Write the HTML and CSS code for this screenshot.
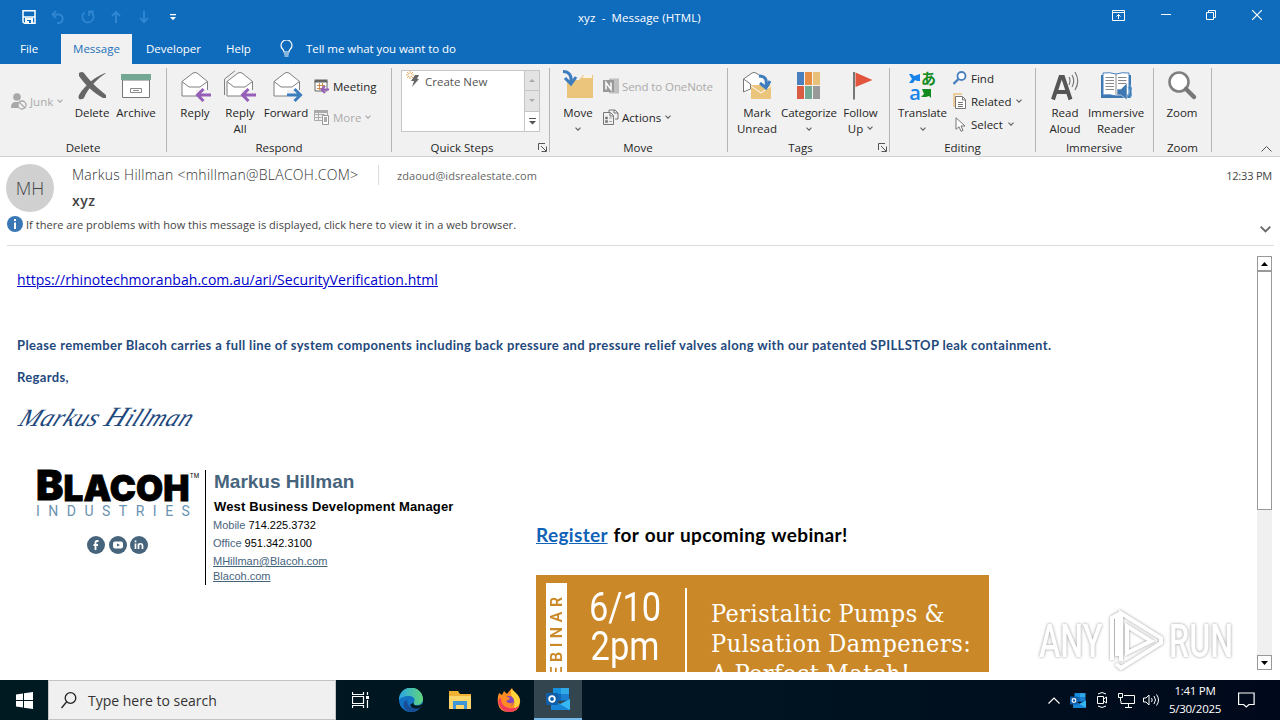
FILE: index.html
```html
<!DOCTYPE html>
<html lang="en">
<head>
  <meta charset="UTF-8" />
  <title>xyz - Message (HTML)</title>
  <link rel="stylesheet" href="styles.css">
</head>
<body>
  <!-- shared shapes -->
  <svg width="0" height="0" class="defs">
    <symbol id="env" viewBox="0 0 32 32">
      <path d="M3 11.500 14 3q2-1 4 0l10.500 8.500V26H3z" fill="#fff" stroke="#808080"/>
      <path d="M3 11.500 10 17h11l7.500-5.500" fill="none" stroke="#808080"/>
    </symbol>
    <symbol id="reply-arrow" viewBox="0 0 16 14">
      <path d="M8.500 1 2.500 7l6 6M3 7h13" fill="none" stroke="#955fb8" stroke-width="3"/>
    </symbol>
    <symbol id="caret" viewBox="0 0 6 4">
      <path d="M.5.700 3 3.200 5.500.700" fill="none" stroke="currentColor" stroke-width="1.200"/>
    </symbol>
    <symbol id="launcher" viewBox="0 0 9 9">
      <path d="M.5 7V.5H7M3 3l5 5M8.500 3.500v5h-5" fill="none" stroke="#555"/>
    </symbol>
    <symbol id="outlook" viewBox="0 0 24 22">
      <path d="M7 0h16v13H7z" fill="#1066b5"/>
      <path d="M7 0h8v6H7z" fill="#1490df"/><path d="M15 0h8v6h-8z" fill="#32a9e7"/>
      <path d="M15 6h8v6h-8z" fill="#1a7fd0"/>
      <path d="M5 11l9 5 10-5v11H5z" fill="#35b8f1"/><path d="M5 11l19 11H5z" fill="#1784d8"/>
      <rect x="0" y="5" width="12" height="12" rx="1" fill="#0f5ea8"/>
      <circle cx="6" cy="11" r="2.800" fill="none" stroke="#fff" stroke-width="1.800"/>
    </symbol>
  </svg>

  <div class="titlebar">
    <div class="quick">
      <svg width="14" height="14" viewBox="0 0 14 14"><path d="M1 .7h12v12.600H2.500L1 12zM1 7h12" fill="none" stroke="#fff" stroke-width="1.500"/><path d="M3 8h8v5.500H3z" fill="#fff"/><path d="M5 10h4v3H7v-2H5z" fill="#0f6cbd"/></svg>
      <svg class="dim" width="14" height="14" viewBox="0 0 14 14"><path d="M5 1 1.500 4.500 5 8M2 4.500h6a4.300 4.300 0 0 1 0 8.500H6" fill="none" stroke="currentColor" stroke-width="2"/></svg>
      <svg class="dim" width="14" height="14" viewBox="0 0 14 14"><path d="M9 1.700A5.600 5.600 0 1 1 3.500 2.500M8 6V1.500h5" fill="none" stroke="currentColor" stroke-width="1.800"/></svg>
      <svg class="dim" width="12" height="14" viewBox="0 0 12 14"><path d="M6 13V2M2 6l4-4 4 4" fill="none" stroke="currentColor" stroke-width="2"/></svg>
      <svg class="dim" width="12" height="14" viewBox="0 0 12 14"><path d="M6 1v11M2 8l4 4 4-4" fill="none" stroke="currentColor" stroke-width="2"/></svg>
      <svg class="customize" width="6" height="7" viewBox="0 0 6 7"><path d="M0 0h6v1.200H0zM0 3h6L3 6.200z" fill="#fff"/></svg>
    </div>
    <div class="title">xyz&nbsp; -&nbsp; Message (HTML)</div>
    <div class="window-buttons">
      <svg width="13" height="11" viewBox="0 0 13 11"><path d="M.5.500h12v10H.5zM.5 2.500h12M6.500 9V4.500M4.500 6.500l2-2 2 2" fill="none" stroke="#fff"/></svg>
      <svg width="10" height="11" viewBox="0 0 10 11"><path d="M0 4.500h10" stroke="#fff"/></svg>
      <svg width="10" height="10" viewBox="0 0 10 10"><path d="M.5 2.500h7v7h-7zM2.500 2V.5h7v7H8" fill="none" stroke="#fff"/></svg>
      <svg width="10" height="10" viewBox="0 0 10 10"><path d="m0 0 10 10M10 0 0 10" stroke="#fff" stroke-width="1.200"/></svg>
    </div>
  </div>

  <div class="tabs">
    <span class="tab file">File</span>
    <span class="tab active">Message</span>
    <span class="tab developer">Developer</span>
    <span class="tab help">Help</span>
    <svg width="13" height="17" viewBox="0 0 13 17"><path d="M4 12c0-3-3-3-3-6.500a5.500 5.500 0 0 1 11 0C12 9 9 9 9 12zM4 14h5M4.500 16h4" fill="none" stroke="#fff" stroke-width="1.200"/></svg>
    <span class="tell">Tell me what you want to do</span>
  </div>

  <div class="ribbon">
    <div class="group g-delete">
      <div class="tools">
        <div class="small junk off">
          <svg width="16" height="17" viewBox="0 0 16 17"><circle cx="6" cy="4" r="3.800" fill="#a8a8a8"/><path d="M0 15c0-5 2-6 5-6h4l-2 6z" fill="#a8a8a8"/><circle cx="11" cy="12" r="4" fill="#f1f1f1" stroke="#a8a8a8" stroke-width="1.300"/><path d="m8 9 6 6" stroke="#a8a8a8" stroke-width="1.300"/></svg>
          <span>Junk</span><svg class="caret" width="6" height="4"><use href="#caret"/></svg>
        </div>
        <div class="big w44">
          <svg width="32" height="32" viewBox="0 0 32 32"><path d="M3 3q3-2 5 0c6 8 12 14 22 22v3h-3C18 23 9 15 3 6z" fill="#666"/><path d="M30 3C21 9 12 18 8 28q-2 2-5 1-1-2 0-4C9 15 19 7 29 3z" fill="#666"/></svg>
          <span>Delete</span>
        </div>
        <div class="big w44">
          <svg width="32" height="32" viewBox="0 0 32 32"><path d="M2.500 10h27v17.500h-27z" fill="#fff" stroke="#777"/><path d="M1 4h30v6H1z" fill="#75a894"/><path d="M10.500 18.500h11v4h-11zM13 20.500h6" fill="#fff" stroke="#888"/></svg>
          <span>Archive</span>
        </div>
      </div>
      <div class="label">Delete</div>
    </div>

    <div class="group g-respond">
      <div class="tools">
        <div class="big w48">
          <svg width="32" height="32" viewBox="0 0 32 32"><use href="#env"/><path d="M17 20h15v12H19z" fill="#f1f1f1"/><use href="#reply-arrow" x="16" y="18" width="16" height="14"/></svg>
          <span>Reply</span>
        </div>
        <div class="big w42">
          <svg width="34" height="32" viewBox="0 0 34 32"><path d="M1.500 25V9L12 .8" fill="none" stroke="#808080"/><use href="#env" x="1" width="32" height="32"/><path d="M18 20h15v12H20z" fill="#f1f1f1"/><use href="#reply-arrow" x="17" y="18" width="16" height="14"/></svg>
          <span>Reply<br>All</span>
        </div>
        <div class="big w50">
          <svg width="34" height="32" viewBox="0 0 34 32"><use href="#env" x="2" width="32" height="32"/><path d="M18 20h14v12H18z" fill="#f1f1f1"/><path d="M18 25h13M25.500 19l6 6-6 6" fill="none" stroke="#3d7dbd" stroke-width="3"/></svg>
          <span>Forward</span>
        </div>
        <div class="stack two respond-stack">
          <div class="small">
            <svg width="16" height="16" viewBox="0 0 16 16"><path d="M1 3h12v10H1z" fill="#fff" stroke="#666"/><path d="M.5 1.500h13v3H.5z" fill="#666"/><path d="M3 7.500h8M3 10.500h5M5.500 5v7M8.500 5v4" stroke="#d08a4a"/><path d="m11 8-3.500 3.500L11 15M8 11.500h7" fill="none" stroke="#955fb8" stroke-width="2"/></svg>
            <span class="meeting">Meeting</span>
          </div>
          <div class="small off">
            <svg width="16" height="16" viewBox="0 0 16 16"><path d="M.5 2.500h13v9H.5zM.5 5.500h10M4.500 3v8M.5 8.500h7" fill="none" stroke="#aaa"/><path d="M0 1h14v3H0z" fill="#aaa"/><path d="M8.500 6.500h6v9h-6z" fill="#fff" stroke="#999"/><path d="M10 8h3v5h-3z" fill="#aaa"/></svg>
            <span class="more">More</span><svg class="caret" width="6" height="4"><use href="#caret"/></svg>
          </div>
        </div>
      </div>
      <div class="label">Respond</div>
    </div>

    <div class="group g-quick">
      <div class="tools">
        <div class="gallery">
          <div class="step">
            <svg width="14" height="17" viewBox="0 0 14 17"><path d="M9 4h4l-2 4h2L6 16l2-6H5z" fill="#666"/><path d="M4 0v8M0 4h8M1 1l6 6M7 1 1 7" stroke="#e6a65c" stroke-width=".9"/><circle cx="4" cy="4" r="1.500" fill="#fff"/></svg>
            <span>Create New</span>
          </div>
          <div class="gallery-bar">
            <span><svg width="6" height="3" viewBox="0 0 6 3"><path d="M0 3 3 0l3 3z" fill="#aaa"/></svg></span>
            <span><svg width="6" height="3" viewBox="0 0 6 3"><path d="m0 0 3 3 3-3z" fill="#aaa"/></svg></span>
            <span class="on"><svg width="7" height="7" viewBox="0 0 7 7"><path d="M0 0h7v1H0zM0 3h7L3.500 6.500z" fill="#555"/></svg></span>
          </div>
        </div>
      </div>
      <div class="label">Quick Steps</div>
      <svg class="launch" width="9" height="9"><use href="#launcher"/></svg>
    </div>

    <div class="group g-move">
      <div class="tools">
        <div class="big w46">
          <svg width="32" height="32" viewBox="0 0 32 32"><path d="M5 10h12l4-5h10v23H5z" fill="#ecc57c"/><path d="m20 8 2-3h8v3z" fill="#fff" opacity=".8"/><path d="M1 1.500c6 0 9 4 8 11" fill="none" stroke="#3d7dbd" stroke-width="3"/><path d="m3 8 6 6 5-7" fill="none" stroke="#3d7dbd" stroke-width="3"/></svg>
          <span>Move</span><svg class="caret under" width="6" height="4"><use href="#caret"/></svg>
        </div>
        <div class="stack two move-stack">
          <div class="small off">
            <svg width="16" height="16" viewBox="0 0 16 16"><path d="M6 .5h10v15H6z" fill="#c0c0c0"/><path d="M0 2h11v12H0z" fill="#999"/><path d="M3 11.500v-7l5 7v-7" fill="none" stroke="#fff" stroke-width="1.500"/></svg>
            <span class="onenote">Send to OneNote</span>
          </div>
          <div class="small">
            <svg width="16" height="16" viewBox="0 0 16 16"><path d="M.5 3.500h7l3 3v9H.5zM7 4v3h3M6 3V1h6l3 3v6h-3M11 1v3h4" fill="none" stroke="#777"/><path d="M2.500 8h2v2h-2zM2.500 11.500h2v2h-2zM6 9h3M6 12.500h3" fill="#777" stroke="#777" stroke-width=".6"/></svg>
            <span class="actions">Actions</span><svg class="caret" width="6" height="4"><use href="#caret"/></svg>
          </div>
        </div>
      </div>
      <div class="label">Move</div>
    </div>

    <div class="group g-tags">
      <div class="tools">
        <div class="big w44">
          <svg width="32" height="32" viewBox="0 0 32 32"><path d="M2.500 23V9L11 3q2-1 4 0l7 5v9L11 23z" fill="#fff"/><path d="M2.500 22V9L11 3q2-1 4 0l3 2M2.500 9l7 5v5l-7 3" fill="none" stroke="#777"/><path d="M10 15h20v14H10z" fill="#ecc57c"/><path d="m10 16 10 7 10-7" fill="none" stroke="#fff"/><path d="M18 6c7 0 8 4 7 10" fill="none" stroke="#3d7dbd" stroke-width="3"/><path d="m19 13 6 5 4-7" fill="none" stroke="#3d7dbd" stroke-width="3"/></svg>
          <span>Mark<br>Unread</span>
        </div>
        <div class="big w60">
          <svg width="32" height="32" viewBox="0 0 32 32"><path d="M4 2h7v13H4z" fill="#4a7fbd"/><path d="M12 2h7v13h-7z" fill="#e88d44"/><path d="M20 2h7v13h-7z" fill="#e8c078"/><path d="M4 16h7v13H4z" fill="#d95b43"/><path d="M12 16h7v13h-7z" fill="#72a893"/><path d="M20 16h7v13h-7z" fill="#999"/></svg>
          <span class="categorize">Categorize</span><svg class="caret under" width="6" height="4"><use href="#caret"/></svg>
        </div>
        <div class="big w43">
          <svg width="32" height="32" viewBox="0 0 32 32"><path d="M9 2v27.500" stroke="#777" stroke-width="2"/><path d="m10.500 2.500 17 7.500-17 7z" fill="#e2543c"/></svg>
          <span>Follow<br>Up <svg class="caret up" width="6" height="4"><use href="#caret"/></svg></span>
        </div>
      </div>
      <div class="label">Tags</div>
      <svg class="launch" width="9" height="9"><use href="#launcher"/></svg>
    </div>

    <div class="group g-editing">
      <div class="tools">
        <div class="big w53">
          <div class="translate"><svg width="12" height="9" viewBox="0 0 12 9"><path d="M0 0h3l2 2 6-2v7H8L6 6 4 9H0l3-4z" fill="#1583e9"/></svg><b class="ja">あ</b><b class="latin">a</b><svg width="11" height="10" viewBox="0 0 11 10"><path d="M1 1h9v9L8 8l-3 1H0l3-3z" fill="#128a20"/></svg></div>
          <span class="translate-text">Translate</span><svg class="caret under" width="6" height="4"><use href="#caret"/></svg>
        </div>
        <div class="stack three">
          <div class="small">
            <svg width="14" height="14" viewBox="0 0 14 14"><circle cx="8.500" cy="5" r="4" fill="#fff" stroke="#4a7fbd" stroke-width="1.800"/><path d="m5.500 8-5 5" stroke="#4a7fbd" stroke-width="2.300"/></svg>
            <span>Find</span>
          </div>
          <div class="small">
            <svg width="14" height="16" viewBox="0 0 14 16"><path d="M1 14V1h8" fill="none" stroke="#ecc080" stroke-width="1.500"/><path d="M2.500 3.500h7l3 3v9h-10zM9.500 4v3h3M5 9.500h5M5 11.500h5M5 13.500h5" fill="#fff" stroke="#777"/></svg>
            <span class="related">Related</span><svg class="caret" width="6" height="4"><use href="#caret"/></svg>
          </div>
          <div class="small">
            <svg width="14" height="15" viewBox="0 0 14 15"><path d="M3 .8v11.500l3-2.500 2 4.500 2-.8-2-4.500h4z" fill="#fff" stroke="#777"/></svg>
            <span>Select</span><svg class="caret" width="6" height="4"><use href="#caret"/></svg>
          </div>
        </div>
      </div>
      <div class="label">Editing</div>
    </div>

    <div class="group g-immersive">
      <div class="tools">
        <div class="big w44">
          <svg width="32" height="32" viewBox="0 0 32 32"><path d="M4 29.500 11.500 7h2.500l7.500 22.500M7 22h12" fill="none" stroke="#555" stroke-width="4"/><path d="M20 7q2 4 0 8M23 5q3.500 6 0 12M26 2q5.500 9 0 18" fill="none" stroke="#777" stroke-width="1.200"/></svg>
          <span>Read<br>Aloud</span>
        </div>
        <div class="big w58">
          <svg width="32" height="32" viewBox="0 0 32 32"><path d="M1 5h30v23H1z" fill="#3d78b0"/><path d="M3 3q7-1 13 1 6-2 13-1v22q-7-1-13 1-6-2-13-1z" fill="#fff" stroke="#4a7fbd"/><path d="M16 4v21M5.500 7.500H14M5.500 10.500H14M5.500 13.500H14M5.500 16.500H14M5.500 19.500H14M18 7.500h8.500M18 10.500h8.500M18 13.500h8.500" stroke="#888"/><path d="M17 19h4l6-6v17l-6-5h-4z" fill="#3d78b0" stroke="#f1f1f1" stroke-width=".6"/><path d="M28 17q3 4 0 9M30 15q4 7 0 13" fill="none" stroke="#65a1d4" stroke-width="1.200"/></svg>
          <span>Immersive<br>Reader</span>
        </div>
      </div>
      <div class="label">Immersive</div>
    </div>

    <div class="group g-zoom">
      <div class="tools">
        <div class="big w56">
          <svg width="32" height="32" viewBox="0 0 32 32"><circle cx="13" cy="12" r="9.500" fill="#fff" stroke="#808080" stroke-width="2.600"/><path d="m20 19 8 8" stroke="#777" stroke-width="4.500" stroke-linecap="round"/></svg>
          <span>Zoom</span>
        </div>
      </div>
      <div class="label">Zoom</div>
    </div>
    <svg class="collapse" width="11" height="6" viewBox="0 0 11 6"><path d="m.5 5.500 5-5 5 5" fill="none" stroke="#555"/></svg>
  </div>

  <div class="header">
    <div class="sender">
      <div class="avatar">MH</div>
      <div class="who">
        <div class="addresses"><span class="from">Markus Hillman &lt;mhillman@BLACOH.COM&gt;</span><span class="to">zdaoud@idsrealestate.com</span></div>
        <div class="subject">xyz</div>
      </div>
      <div class="time">12:33 PM</div>
    </div>
    <div class="info">
      <svg width="16" height="16" viewBox="0 0 16 16"><circle cx="8" cy="8" r="8" fill="#3a78b5"/><path d="M7 3h2v2H7zM7 6.500h2V13H7z" fill="#fff"/></svg>
      <span>If there are problems with how this message is displayed, click here to view it in a web browser.</span>
      <svg class="expand" width="11" height="7" viewBox="0 0 11 7"><path d="m.7.700 4.800 4.800L10.300.700" fill="none" stroke="#666" stroke-width="1.800"/></svg>
    </div>
  </div>

  <div class="message">
    <div class="mail">
      <a class="url" href="#">https://rhinotechmoranbah.com.au/ari/SecurityVerification.html</a>
      <p class="remember">Please remember Blacoh carries a full line of system components including back pressure and pressure relief valves along with our patented SPILLSTOP leak containment.</p>
      <p class="regards">Regards,</p>
      <div class="signature"><span>Markus <em>H</em>illman</span></div>
      <div class="columns">
        <div class="logo">
          <div class="blacoh"><span class="b">B</span><span class="lacoh">LACOH</span><sup>TM</sup></div>
          <div class="industries">INDUSTRIES</div>
          <div class="social">
            <svg width="18" height="18" viewBox="0 0 18 18"><circle cx="9" cy="9" r="9" fill="#47647d"/><path d="M11.500 5H10q-1.500 0-1.500 1.500V14M6.500 9H11" fill="none" stroke="#fff" stroke-width="1.800"/></svg>
            <svg width="18" height="18" viewBox="0 0 18 18"><circle cx="9" cy="9" r="9" fill="#47647d"/><rect x="4" y="5.500" width="10" height="7" rx="2" fill="#fff"/><path d="m8 7.500 3 1.500-3 1.500z" fill="#47647d"/></svg>
            <svg width="18" height="18" viewBox="0 0 18 18"><circle cx="9" cy="9" r="9" fill="#47647d"/><path d="M5.500 7.500V13M5.500 4.500v1.700M8.500 13V7.500M8.500 10c0-3 4-3 4 0v3" fill="none" stroke="#fff" stroke-width="1.700"/></svg>
          </div>
        </div>
        <div class="contact">
          <div class="name">Markus Hillman</div>
          <div class="job">West Business Development Manager</div>
          <div class="line mobile"><i>Mobile</i> 714.225.3732</div>
          <div class="line office"><i>Office</i> 951.342.3100</div>
          <div class="line mailto"><a href="#">MHillman@Blacoh.com</a></div>
          <div class="line site"><a href="#">Blacoh.com</a></div>
        </div>
        <div class="webinar">
          <div class="register"><a href="#">Register</a> for our upcoming webinar!</div>
          <div class="banner">
            <div class="strip"><span>WEBINAR</span></div>
            <div class="date"><span class="day">6/10</span><span class="hour">2pm</span></div>
            <div class="topic">Peristaltic Pumps &amp;<br>Pulsation Dampeners:<br>A Perfect Match!</div>
          </div>
        </div>
      </div>
    </div>
    <div class="scrollbar">
      <span class="arrow"><svg width="7" height="4" viewBox="0 0 7 4"><path d="M0 4 3.500 0 7 4z"/></svg></span>
      <span class="thumb"></span>
      <span class="arrow down"><svg width="7" height="4" viewBox="0 0 7 4"><path d="m0 0 3.500 4L7 0z"/></svg></span>
    </div>
    <div class="watermark">
      <span>ANY</span>
      <svg width="62" height="66" viewBox="0 0 62 66"><path d="M8 52V10l5-3v41M17 53V5l40 25v5L17 60l-5-4M23 45V18l24 15z" fill="none" stroke="#fff" stroke-width="4"/></svg>
      <span>RUN</span>
    </div>
  </div>

  <div class="taskbar">
    <div class="start"><svg width="17" height="17" viewBox="0 0 17 17"><path d="m0 2.500 7-1v6.500H0zM8 1.300 17 0v8H8zM0 9h7v6.500l-7-1zM8 9h9v8l-9-1.300z" fill="#fff"/></svg></div>
    <div class="search">
      <svg width="16" height="17" viewBox="0 0 16 17"><circle cx="9.500" cy="6" r="5.300" fill="none" stroke="#222" stroke-width="1.300"/><path d="m5.500 10-5 6" stroke="#222" stroke-width="1.300"/></svg>
      <span>Type here to search</span>
    </div>
    <div class="app"><svg width="18" height="16" viewBox="0 0 18 16"><path d="M.5 0v2.500h11V0M.5 4.500h11v7H.5zM.5 16v-2.500h11V16M15.500 0v3M15.500 8v8" fill="none" stroke="#fff" stroke-width="1.200"/><path d="M14 4h3v3h-3z" fill="#fff"/></svg></div>
    <div class="app edge"><svg width="24" height="24" viewBox="0 0 24 24">
      <defs><linearGradient id="edge" x1="0" x2="1"><stop offset="0" stop-color="#2aa6e3"/><stop offset="1" stop-color="#62d47d"/></linearGradient></defs>
      <circle cx="12" cy="12" r="12" fill="#1272c4"/><path d="M0 12A12 12 0 0 1 24 11c0 4-3 6-6 6-4 0-4-2-3-3 2-4-2-6-5-6-5 0-9 2-10 4z" fill="url(#edge)"/><path d="M8 12c0 7 5 10 14 7-4 6-11 6-15 3-4-4-3-9 1-10z" fill="#174e95"/><path d="M15 14c-2 3 3 5 8 2l1 3-3 1q-8 2-10-3z" fill="#061d28"/></svg></div>
    <div class="app folder"><svg width="22" height="20" viewBox="0 0 22 20"><path d="M0 1h9l2 3h11v14H0z" fill="#f0b232"/><path d="M0 6h22v13H0z" fill="#fbd76b"/><path d="M4 11h14v8h-3v-4H7v4H4z" fill="#3f96d6"/></svg></div>
    <div class="app firefox"><svg width="24" height="24" viewBox="0 0 24 24"><path d="M2 5l3 2 2-4 3 3q3-4 5-6l2 4q7 4 6 11-1 9-11 9T1 15Q0 10 2 5z" fill="#ff8b25"/><path d="M14 1q8 5 9 12-1 7-7 9 4-8-2-15z" fill="#ffd43b"/><path d="M1 13q2 10 11 11 7 0 10-6-5 3-10 2Q3 18 4 9z" fill="#f33c5b"/><circle cx="12" cy="13" r="5" fill="#8444bd"/><path d="M7 9q5-1 6 2l-4 2q4 4 7 1-1 5-6 4-4-1-5-6z" fill="#ff8b25"/></svg></div>
    <div class="app open"><svg width="24" height="22"><use href="#outlook"/></svg></div>
    <div class="tray">
      <svg width="12" height="7" viewBox="0 0 12 7"><path d="m.5 6.500 5.500-5.500 5.500 5.500" fill="none" stroke="#fff" stroke-width="1.200"/></svg>
      <svg width="16" height="15"><use href="#outlook"/></svg>
      <svg width="12" height="16" viewBox="0 0 12 16"><path d="M1.500 4.500h6v7h-6zM7.500 7l3-2v6l-3-2M2 2q4-3 8 0M2 14q4 3 8 0" fill="none" stroke="#fff"/></svg>
      <svg width="17" height="15" viewBox="0 0 17 15"><path d="M6 2.500h10.500v8H3V8M10.500 11v3M7 14.500h7M.5.500h4v4h-4zM2.500 5v3" fill="none" stroke="#fff"/></svg>
      <svg width="17" height="14" viewBox="0 0 17 14"><path d="M.5 5h2.500l3-3v10l-3-3H.5zM8.500 5q1.500 2 0 4M11 3q3 4 0 8M13.500 1.500q4 5.500 0 11" fill="none" stroke="#fff"/></svg>
      <div class="clock"><span>1:41 PM</span><span>5/30/2025</span></div>
      <svg class="note" width="17" height="17" viewBox="0 0 17 17"><path d="M.6 1h15.500v11.500H11L8.300 15l-2.700-2.500h-5z" fill="none" stroke="#fff" stroke-width="1.200"/></svg>
    </div>
  </div>
</body>
</html>
```

FILE: styles.css
```css
* {
  box-sizing: border-box;
}
body {
  margin: 0;
  width: 1280px;
  height: 720px;
  overflow: hidden;
  background: #fff;
  font-family: "Open Sans", "Noto Sans", sans-serif;
  font-size: 11.5px;
  color: #262626;
}
svg {
  display: block;
  flex: none;
}
.defs {
  position: absolute;
}

/* title bar and tabs */
.titlebar {
  display: flex;
  height: 34px;
  background: #0f6cbd;
  color: #fff;
}
.quick {
  display: flex;
  align-items: center;
  gap: 15px;
  width: 578px;
  padding-left: 22px;
}
.quick .dim + .dim {
  margin-left: .5px;
}
.quick .customize {
  margin-left: 5px;
}
.dim {
  color: #2f85d0;
}
.title {
  padding-top: 10px;
  width: 534px;
  white-space: nowrap;
  letter-spacing: .1px;
}
.window-buttons {
  display: flex;
  align-items: center;
  height: 30px;
}
.window-buttons svg + svg {
  margin-left: 35.500px;
}
.tabs {
  display: flex;
  align-items: center;
  height: 30px;
  padding-bottom: 1px;
  background: #0f6cbd;
  color: #fff;
  white-space: nowrap;
}
.file {
  width: 61px;
  padding-left: 20px;
}
.active {
  width: 71px;
  height: 30px;
  margin-bottom: -1px;
  line-height: 30px;
  text-align: center;
  background: #f1f1f1;
  color: #2470b8;
}
.developer {
  width: 94px;
  padding-left: 14px;
}
.help {
  width: 54px;
}
.tell {
  margin-left: 13px;
  letter-spacing: -.05px;
}

/* ribbon */
.ribbon {
  display: flex;
  height: 93px;
  background: #f1f1f1;
  border-bottom: 1px solid #d0d0d0;
  position: relative;
}
.group {
  display: flex;
  flex-direction: column;
  position: relative;
  height: 84px;
  margin-top: 4px;
  border-right: 1px solid #b5b5b5;
}
.g-delete { width: 167px; }
.g-respond { width: 225px; padding-left: 4px; }
.g-quick { width: 158px; padding-left: 9px; }
.g-move { width: 178px; padding-left: 5px; }
.g-tags { width: 162px; padding-left: 7px; }
.g-editing { width: 146px; padding-left: 6px; }
.g-immersive { width: 118px; padding-left: 7px; }
.g-zoom { width: 58px; }
.tools {
  display: flex;
  flex: none;
  height: 72px;
}
.label {
  line-height: 16px;
  text-align: center;
}
.g-respond .label { padding-right: 4px; }
.g-quick .label { padding-right: 26px; }
.g-move .label { padding-right: 6px; }
.g-tags .label { padding-right: 23px; }
.g-editing .label { padding-right: 6px; }
.g-immersive .label { padding-right: 8px; }
.launch {
  position: absolute;
  right: 2px;
  bottom: 0;
}
.big {
  display: flex;
  flex-direction: column;
  align-items: center;
  padding-top: 2px;
  text-align: center;
  line-height: 16px;
  white-space: nowrap;
}
.big > span {
  margin-top: 3px;
}
.w42 { width: 42px; }
.w43 { width: 43px; }
.w44 { width: 44px; }
.w46 { width: 46px; }
.w48 { width: 48px; }
.w50 { width: 50px; }
.w53 { width: 53px; }
.w56 { width: 56px; }
.w58 { width: 58px; }
.w60 { width: 60px; }
.caret {
  display: inline-block;
  color: #666;
  margin-left: 1px;
}
.up {
  margin-bottom: 3px;
}
.under {
  margin: 6px 0 0;
}
.categorize,
.translate-text {
  letter-spacing: -.1px;
}
.small {
  display: flex;
  align-items: center;
  gap: 3px;
  height: 16px;
  white-space: nowrap;
}
.off,
.off .caret {
  color: #ababab;
}
.junk {
  width: 70px;
  padding-left: 11px;
  height: 66px;
}
.stack {
  display: flex;
  flex-direction: column;
}
.two {
  gap: 15px;
  padding-top: 10px;
}
.three {
  gap: 7px;
  padding: 2px 0 0 4px;
}
.three .small {
  gap: 4px;
}
.respond-stack {
  margin-left: 3px;
}
.move-stack {
  margin-left: 2px;
}
.onenote {
  letter-spacing: -.1px;
}
.gallery {
  display: flex;
  width: 139px;
  height: 62px;
  margin-top: 2px;
  background: #fff;
  border: 1px solid #c6c6c6;
}
.step {
  display: flex;
  width: 122px;
  height: 22px;
  padding-left: 4px;
  gap: 5px;
  line-height: 22px;
  color: #555;
}
.gallery-bar {
  flex: 1;
  display: flex;
  flex-direction: column;
}
.gallery-bar span {
  flex: 1;
  display: flex;
  align-items: center;
  justify-content: center;
  background: #e3e3e3;
  border-left: 1px solid #c6c6c6;
  border-bottom: 1px solid #c6c6c6;
}
.gallery-bar .on {
  background: #fff;
  border-bottom: 0;
}
.translate {
  display: grid;
  grid-template-columns: 12px 15px;
  grid-template-rows: 14px 15px;
  align-items: center;
  width: 27px;
  height: 32px;
  padding-top: 1px;
}
.ja {
  font: bold 15px/14px "Noto Sans CJK JP", sans-serif;
  color: #128a20;
}
.latin {
  font-size: 20px;
  line-height: 12px;
  font-weight: 600;
  color: #1583e9;
}
.collapse {
  margin: 82px 0 0 49px;
}

/* message header */
.header {
  height: 89px;
  margin: 0 6px 0 7px;
  border-bottom: 1px solid #dcdcdc;
  color: #444;
}
.sender {
  display: flex;
  height: 58px;
  padding-top: 7px;
}
.avatar {
  width: 48px;
  height: 48px;
  margin-left: -1px;
  border-radius: 50%;
  background: #d0d0d0;
  color: #444;
  font-size: 18px;
  font-weight: 300;
  line-height: 48px;
  text-align: center;
}
.who {
  flex: 1;
  padding-left: 18px;
}
.addresses {
  display: flex;
  align-items: center;
  height: 22px;
}
.from {
  width: 307px;
  height: 20px;
  line-height: 20px;
  border-right: 1px solid #ddd;
  font-size: 14px;
  font-weight: 300;
  letter-spacing: .27px;
  white-space: nowrap;
  color: #333;
}
.to {
  margin-left: 18px;
  font-size: 11px;
  color: #666;
  letter-spacing: .05px;
}
.subject {
  font-size: 14px;
  font-weight: 600;
  letter-spacing: .5px;
  line-height: 29px;
}
.time {
  padding: 4px 2px 0 0;
  font-size: 11px;
  letter-spacing: -.2px;
  white-space: nowrap;
}
.info {
  display: flex;
  align-items: center;
  gap: 3px;
  height: 18px;
  font-size: 11px;
  letter-spacing: .035px;
}
.expand {
  margin: 10px 3px 0 auto;
}

/* message body */
.message {
  display: flex;
  position: relative;
  height: 434px;
  padding-top: 10px;
}
.mail {
  width: 1257px;
  height: 416px;
  padding: 14px 0 0 17px;
  overflow: hidden;
}
.url {
  display: block;
  line-height: 20px;
  font-size: 14px;
  letter-spacing: .05px;
  color: #0000cc;
}
p {
  margin: 0;
  font-family: Lato, sans-serif;
  font-weight: bold;
  font-size: 13px;
  letter-spacing: .36px;
  line-height: 20px;
  color: #1f497d;
  white-space: nowrap;
}
.remember {
  margin-top: 45px;
}
.regards {
  margin-top: 12px;
}
.signature {
  height: 83px;
  padding: 12px 0 0 4px;
  font-family: "Liberation Serif", serif;
  font-style: italic;
  font-size: 25px;
  letter-spacing: .4px;
  line-height: 36px;
  color: #1f497d;
}
.signature span {
  display: inline-block;
  transform: skewX(-24deg);
}
.signature em {
  font-size: 28px;
}
.columns {
  display: flex;
}
.logo {
  width: 189px;
  height: 115px;
  padding-left: 19px;
  border-right: 1px solid #000;
}
.blacoh {
  display: flex;
  align-items: flex-end;
  height: 30px;
  color: #000;
  font-family: Inter, sans-serif;
  font-weight: 900;
  font-size: 35px;
  letter-spacing: .15px;
  line-height: 24px;
  white-space: nowrap;
  -webkit-text-stroke: .8px #000;
}
.b {
  font-size: 41px;
  line-height: 29px;
}
sup {
  align-self: flex-start;
  font-size: 6px;
  font-weight: 400;
  line-height: 12px;
  -webkit-text-stroke: 0;
}
.industries {
  margin-top: 2px;
  font-family: Roboto, sans-serif;
  font-size: 14px;
  line-height: 18px;
  letter-spacing: 8.500px;
  color: #6a93b0;
}
.social {
  display: flex;
  gap: 3.500px;
  padding: 16px 0 0 51px;
}
.contact {
  width: 330px;
  padding: 1px 0 0 8px;
  font-family: "Liberation Sans", sans-serif;
  color: #000;
  white-space: nowrap;
}
.name {
  font-size: 19px;
  font-weight: bold;
  line-height: 22px;
  color: #47647d;
}
.job {
  padding-top: 4px;
  font-size: 13px;
  font-weight: bold;
  letter-spacing: .15px;
  line-height: 19px;
}
.line {
  margin-left: -1px;
  font-size: 11px;
  line-height: 18px;
}
.line i {
  font-style: normal;
  color: #47647d;
}
.line a {
  color: #47647d;
}
.site {
  line-height: 12px;
}
.register {
  padding-top: 52px;
  height: 105px;
  font-family: Lato, sans-serif;
  font-weight: bold;
  font-size: 19px;
  letter-spacing: .35px;
  word-spacing: 1px;
  line-height: 26px;
  color: #000;
  white-space: nowrap;
}
.register a {
  color: #0f63b8;
}
.banner {
  display: flex;
  width: 453px;
  height: 180px;
  background: #ca8828;
  color: #fff;
}
.strip {
  width: 21px;
  margin: 8px 0 0 10px;
  background: #fff;
  color: #ca8828;
}
.strip span {
  display: block;
  writing-mode: vertical-rl;
  transform: rotate(180deg);
  width: 21px;
  height: 142px;
  padding-bottom: 9px;
  text-align: right;
  font: 600 16px/21px Roboto, sans-serif;
  letter-spacing: 4.500px;
}
.date {
  display: flex;
  flex-direction: column;
  align-items: center;
  width: 120px;
  height: 150px;
  margin-top: 13px;
  padding-right: 2px;
  border-right: 2px solid #fff;
  font-family: Roboto, sans-serif;
  font-size: 40px;
  line-height: 39px;
}
.date span {
  transform: scaleX(.86);
}
.topic {
  padding: 24px 0 0 24px;
  font-family: "DejaVu Serif Condensed", "DejaVu Serif", serif;
  font-size: 25px;
  letter-spacing: .5px;
  word-spacing: -1px;
  line-height: 30px;
  white-space: nowrap;
}
.scrollbar {
  display: flex;
  flex-direction: column;
  width: 15px;
  height: 414px;
  background: #f0f0f0;
}
.arrow {
  display: flex;
  align-items: center;
  justify-content: center;
  height: 15px;
  background: #fff;
  border: 1px solid #999;
}
.thumb {
  height: 239px;
  background: #fff;
  border: 1px solid #999;
}
.down {
  margin-top: auto;
}
.watermark {
  position: absolute;
  left: 1039px;
  top: 362px;
  display: flex;
  align-items: center;
  gap: 3px;
  color: #fff;
  font: 500 46px/66px Roboto, sans-serif;
  filter: drop-shadow(0 0 1.5px #999);
}
.watermark span {
  width: 62px;
  transform: scaleX(.7);
  transform-origin: left;
}

/* taskbar */
.taskbar {
  display: flex;
  height: 40px;
  background: linear-gradient(90deg, #001a22, #001421 60%, #00091b);
  color: #fff;
}
.start {
  display: flex;
  align-items: center;
  justify-content: center;
  width: 48px;
}
.search {
  display: flex;
  align-items: center;
  gap: 11px;
  width: 288px;
  padding-left: 12px;
  background: #f0f0f0;
  border: 1px solid #c4c4c4;
  color: #333;
  font-size: 14px;
}
.app {
  display: flex;
  align-items: center;
  justify-content: center;
  width: 49px;
}
.edge,
.folder,
.firefox {
  padding-left: 2px;
}
.open {
  width: 48px;
  margin-left: 2px;
  background: #33464f;
  border-bottom: 2px solid #76b9ed;
}
.tray {
  display: flex;
  align-items: center;
  margin-left: auto;
  gap: 8px;
}
.tray > svg:nth-child(-n+3) {
  margin-right: 2px;
}
.clock {
  display: flex;
  flex-direction: column;
  align-items: center;
  width: 54px;
  line-height: 18px;
  letter-spacing: -.25px;
}
.note {
  margin: 0 25px 0 8px;
}
```
